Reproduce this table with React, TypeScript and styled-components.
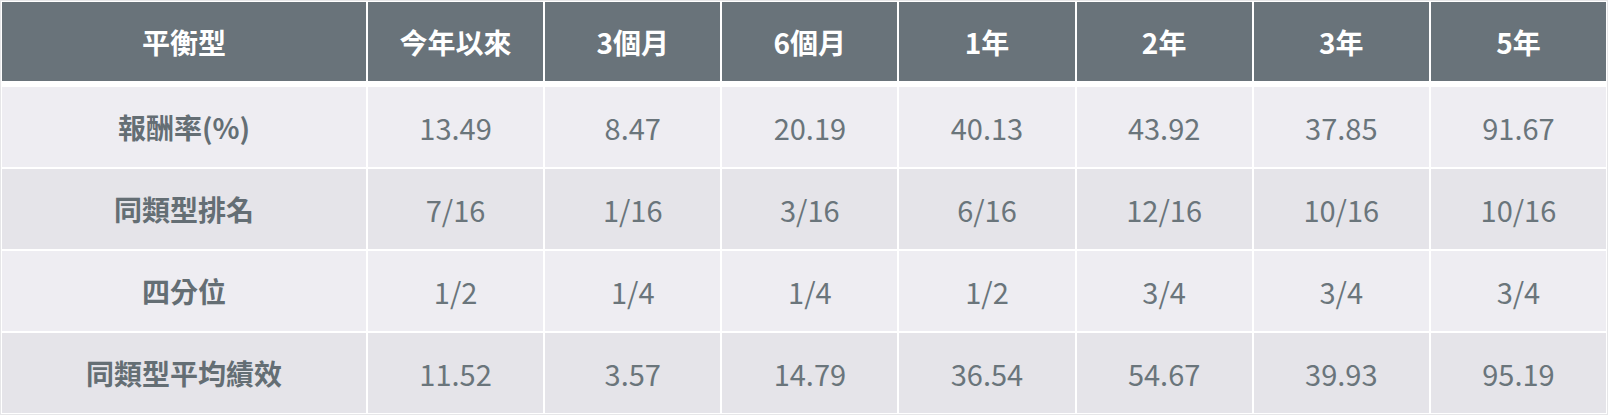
import React from 'react';
import styled, { createGlobalStyle } from 'styled-components';

const GlobalStyle = createGlobalStyle`
  html, body {
    margin: 0;
    padding: 0;
    background: #ffffff;
  }
  body {
    font-family: "Noto Sans CJK TC", "Noto Sans", sans-serif;
  }
`;

const StyledTable = styled.div`
  width: 1608px;
  box-sizing: border-box;
  padding: 1px;
  border: 1px solid #e6e6e8;
  display: flex;
  flex-direction: column;
  gap: 2px;
`;

const StyledRow = styled.div<{ $head?: boolean }>`
  display: grid;
  grid-template-columns: 364px repeat(7, 1fr);
  gap: 2px;
  height: ${({ $head }) => ($head ? '79px' : '80px')};
  margin-bottom: ${({ $head }) => ($head ? '4px' : '0')};
`;

const StyledHeadCell = styled.div`
  display: flex;
  align-items: center;
  justify-content: center;
  background: #69737a;
  color: #ffffff;
  font-size: 28px;
  font-weight: 700;
`;

const StyledCell = styled.div<{ $shade: boolean; $label?: boolean }>`
  display: flex;
  align-items: center;
  justify-content: center;
  background: ${({ $shade }) => ($shade ? '#e5e4e9' : '#eeedf2')};
  color: ${({ $label }) => ($label ? '#646e74' : '#6a757b')};
  font-size: ${({ $label }) => ($label ? '28px' : '29px')};
  font-weight: ${({ $label }) => ($label ? 700 : 400)};
`;

const headers = ['平衡型', '今年以來', '3個月', '6個月', '1年', '2年', '3年', '5年'];

const rows: { label: string; values: string[] }[] = [
  { label: '報酬率(%)', values: ['13.49', '8.47', '20.19', '40.13', '43.92', '37.85', '91.67'] },
  { label: '同類型排名', values: ['7/16', '1/16', '3/16', '6/16', '12/16', '10/16', '10/16'] },
  { label: '四分位', values: ['1/2', '1/4', '1/4', '1/2', '3/4', '3/4', '3/4'] },
  { label: '同類型平均績效', values: ['11.52', '3.57', '14.79', '36.54', '54.67', '39.93', '95.19'] },
];

const App = () => {
  return (
    <>
      <GlobalStyle />
      <StyledTable>
        <StyledRow $head>
          {headers.map((h) => (
            <StyledHeadCell key={h}>{h}</StyledHeadCell>
          ))}
        </StyledRow>
        {rows.map((row, i) => (
          <StyledRow key={row.label}>
            <StyledCell $shade={i % 2 === 1} $label>
              {row.label}
            </StyledCell>
            {row.values.map((v, j) => (
              <StyledCell key={j} $shade={i % 2 === 1}>
                {v}
              </StyledCell>
            ))}
          </StyledRow>
        ))}
      </StyledTable>
    </>
  );
};

export default App;
